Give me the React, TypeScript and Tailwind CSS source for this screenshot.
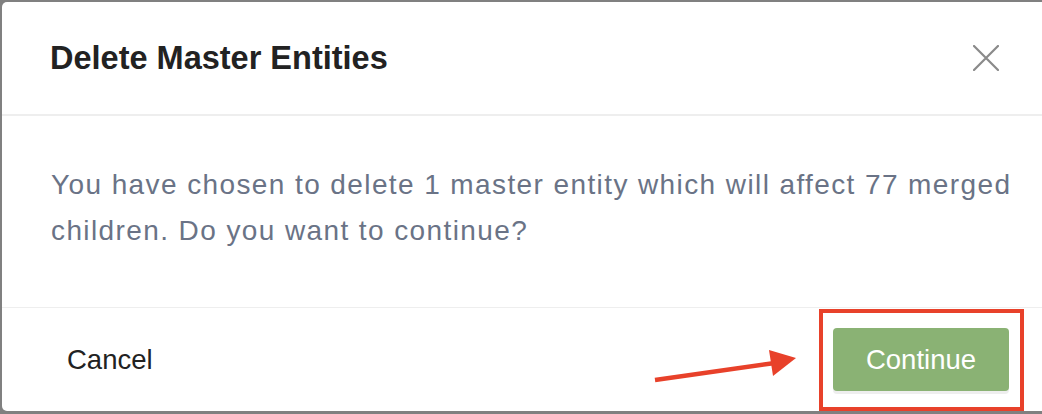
import React from "react";

const font = { fontFamily: '"Liberation Sans", Arial, sans-serif' };

const CloseIcon = () => (
  <svg viewBox="0 0 26 26" className="w-[26px] h-[26px]" fill="none">
    <path d="M1 1L25 25M25 1L1 25" stroke="#8a8a8a" strokeWidth="2.2" strokeLinecap="round" />
  </svg>
);

export default function App() {
  return (
    <div className="relative w-[1042px] h-[414px] bg-[#808080] pt-[2px] pl-[2px] pb-[3px] overflow-hidden" style={font}>
      {/* Dialog */}
      <div className="w-[1045px] h-full bg-white rounded-[5px] flex flex-col">
        {/* Header */}
        <div className="h-[114px] flex items-center justify-between pl-[48px] pr-[48px] border-b-2 border-[#eeeeee] shrink-0">
          <h1 className="text-[32.5px] font-bold text-[#222222]">Delete Master Entities</h1>
          <button className="p-0">
            <CloseIcon />
          </button>
        </div>

        {/* Body */}
        <div className="pt-[46px] pb-[53px] pl-[49px] pr-[10px] border-b border-[#eeeeee] shrink-0">
          <p className="text-[28px] leading-[46px] tracking-[1.4px] text-[#6a7386] whitespace-nowrap">
            You have chosen to delete 1 master entity which will affect 77 merged
            <br />
            children. Do you want to continue?
          </p>
        </div>

        {/* Footer */}
        <div className="flex-1 flex items-center justify-between pl-[65px] pr-[38px]">
          <button className="text-[27.5px] text-[#222222]">Cancel</button>
          <button className="w-[176px] h-[63px] rounded-[4px] bg-[#8ab274] text-white text-[27.5px] shadow-[0_3px_0_#eeeeee]">
            Continue
          </button>
        </div>
      </div>

      {/* Annotation: red highlight box */}
      <div className="absolute left-[819px] top-[309px] w-[205px] h-[102px] border-[4px] border-[#e8412a] pointer-events-none" />

      {/* Annotation: arrow */}
      <svg className="absolute left-0 top-0 pointer-events-none" width="1042" height="414">
        <line x1="655" y1="380" x2="775" y2="363" stroke="#e8412a" strokeWidth="4.5" />
        <polygon points="796,358 769,350 773,376" fill="#e8412a" />
      </svg>
    </div>
  );
}
